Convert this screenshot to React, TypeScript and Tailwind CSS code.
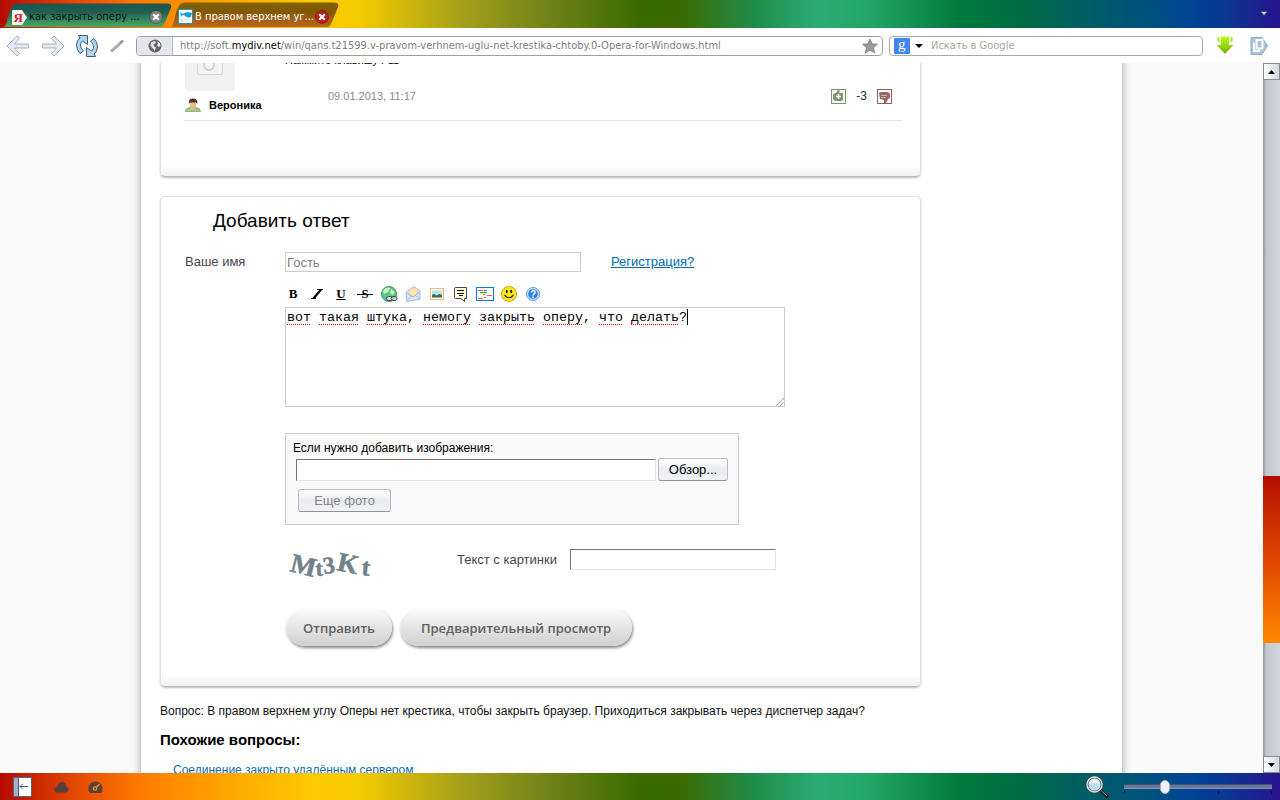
import React, { useState } from "react";
import { clsx } from "clsx";

const rainbow =
  "bg-[linear-gradient(90deg,#b40a00_0%,#e44a00_6%,#ff7b00_11%,#ffa800_18%,#ffc800_24%,#f5cb00_28%,#a5a01a_36%,#6f8218_43%,#3a6b00_50%,#3c6a00_53%,#1f8d4c_59%,#2bad74_64%,#22a566_68%,#007a3c_75%,#006b45_80%,#005f60_84%,#005080_90%,#004494_93%,#0c3590_96%,#28128f_100%)]";

const uiFont = "font-['DejaVu_Sans_Condensed','DejaVu_Sans',sans-serif]";

const softButton =
  "h-[23px] rounded-[3px] border border-[#b9bbc2] border-b-[#8f9198] bg-linear-to-b from-white via-[#ebecf0] to-[#f1f2f5] text-[13px] leading-4";

const sunken =
  "border border-[#e3e3e3] border-l-[#777] border-t-[#777] bg-white px-1 text-[13px] outline-none";

const misspelled = [
  [0, 3],
  [4, 9],
  [10, 15],
  [17, 23],
  [24, 31],
  [32, 37],
  [39, 42],
  [43, 49],
];

function CloseIcon({ color }: { color: string }) {
  return (
    <svg width="14" height="14" viewBox="0 0 14 14">
      <circle cx="7" cy="7" r="6.5" fill={color} stroke="#0004" />
      <path d="M4.2 4.2l5.6 5.6M9.8 4.2L4.2 9.8" stroke="#fff" strokeWidth="2.2" />
    </svg>
  );
}

function Tab({
  title,
  active,
  icon,
}: {
  title: string;
  active?: boolean;
  icon: React.ReactNode;
}) {
  return (
    <div
      className={clsx(
        "relative flex w-[168px] items-center pt-1",
        active ? "-ml-px h-[25px] pl-[7px]" : "h-6 pl-2"
      )}
    >
      <svg
        className="absolute inset-0 size-full"
        viewBox="0 0 168 25"
        preserveAspectRatio="none"
      >
        <defs>
          <linearGradient id={active ? "tabB" : "tabA"} x1="0" x2="0" y1="0" y2="1">
            <stop offset="0" stopColor={active ? "#7d6300" : "#1c5550"} />
            <stop offset="0.4" stopColor={active ? "#835600" : "#225f50"} />
            <stop offset="0.6" stopColor={active ? "#9c5c10" : "#2f7d5c"} />
            <stop offset="1" stopColor={active ? "#bb6620" : "#47a862"} />
          </linearGradient>
        </defs>
        <path
          d="M0 25C4 22 3 12 8 4Q10 0.5 14 0.5H163Q168.500 0.500 167 5L161 20Q159 25 156 25Z"
          fill={active ? "url(#tabB)" : "url(#tabA)"}
        />
      </svg>
      <span className="relative mr-[2px] shrink-0">{icon}</span>
      <a
        href="#tab"
        className={clsx("relative w-[116px] whitespace-nowrap", active ? "text-white" : "text-[#0b1512]")}
      >
        {title}
      </a>
      <button type="button" aria-label="Закрыть вкладку" className="relative ml-1 shrink-0">
        <CloseIcon color={active ? "#c01a1a" : "#808080"} />
      </button>
    </div>
  );
}

function TabBar() {
  return (
    <div className={clsx("flex h-7 shrink-0 items-end justify-between", rainbow)}>
      <div className="flex items-end pb-px pl-1">
        <Tab
          title="как закрыть оперу ..."
          icon={
            <svg width="15" height="15" viewBox="0 0 15 15">
              <path d="M1 0H10L15 7.500L10 15H1Q0 15 0 14V1Q0 0 1 0Z" fill="#f3f3f3" />
              <text x="1.500" y="12" fontSize="13" fontWeight="bold" fill="#e02020" fontFamily="Liberation Serif, serif">
                Я
              </text>
            </svg>
          }
        />
        <Tab
          active
          title="В правом верхнем уг..."
          icon={
            <svg width="15" height="15" viewBox="0 0 15 15">
              <rect x="0.500" y="0.500" width="14" height="14" fill="#fff" stroke="#1c98b8" />
              <path d="M2 3l3 2c2-2 6-2 9-1l-1 4c-3 1-5 0-7-2L3 7z" fill="#1b9fd0" />
              <path d="M3 11h2M7 10l1 1" stroke="#60c0de" />
            </svg>
          }
        />
      </div>
      <button type="button" aria-label="Закрытые вкладки" className="mr-3 mb-3">
        <svg width="8" height="5" viewBox="0 0 8 5">
          <path d="M0.500 0.500H7.500L4 4.500Z" fill="#d0d0ea" stroke="#22205a" strokeWidth="0.500" />
        </svg>
      </button>
    </div>
  );
}

function Arrow({ flip }: { flip?: boolean }) {
  return (
    <svg width="24" height="22" viewBox="0 0 24 22" className={clsx(flip && "-scale-x-100")}>
      <path
        d="M11 1L1 11L11 21L13.500 18.500L8.500 13H22.500V9H8.500L13.500 3.500Z"
        fill="#e3eaf1"
        stroke="#a5b0bd"
        strokeLinejoin="round"
      />
    </svg>
  );
}

function Toolbar() {
  return (
    <div className="flex h-[35px] shrink-0 items-center bg-white pl-[6px] pr-3">
      <button type="button" aria-label="Назад">
        <Arrow />
      </button>
      <button type="button" aria-label="Вперёд" className="ml-[11px]">
        <Arrow flip />
      </button>
      <button type="button" aria-label="Обновить" className="ml-[10px]">
        <svg width="24" height="24" viewBox="0 0 24 24">
          <g fill="#b5d4e8" stroke="#36607f" strokeLinejoin="round">
            <path d="M12.500 1.500H3.500L5 4Q1.500 6.500 1.500 11Q1.500 16 5 19.500L8.500 17Q5.500 14.500 5.500 11Q5.500 8.500 7.500 7L12.500 10.500Z" />
            <path d="M11.500 22.500H20.500L19 20Q22.500 17.500 22.500 13Q22.500 8 19 4.500L15.500 7Q18.500 9.500 18.500 13Q18.500 15.500 16.500 17L11.500 13.500Z" />
          </g>
        </svg>
      </button>
      <button type="button" aria-label="Жезл" className="ml-[10px]">
        <svg width="16" height="16" viewBox="0 0 16 16">
          <path d="M2 13.500L14 2.500" stroke="#999" strokeWidth="3" />
          <path d="M2 12.800L11 4.500" stroke="#d2d2d2" strokeWidth="1" />
        </svg>
      </button>
      <div className="ml-[11px] flex h-5 flex-1 items-center overflow-hidden rounded-[4px] border border-[#9a9fab] bg-white">
        <span className="flex h-full w-9 shrink-0 items-center justify-center border-r border-[#b5b9c3] bg-[#e4e6ec]">
          <svg width="14" height="14" viewBox="0 0 14 14">
            <circle cx="7" cy="7" r="6.500" fill="#666" />
            <path d="M3 3.500L6 2L8 3L6.500 5L5 5.500L6.500 7.500L8 8.500L6.500 12L5 9.500L2.500 7ZM9 2L12 4.500L12.500 7L10.500 8L9 6L10 4.500Z" fill="#e8e8e8" />
          </svg>
        </span>
        <a href="#page" className="ml-[7px] flex-1 truncate text-[#808080]">
          http://soft.<span className="text-black">mydiv.net</span>
          /win/qans.t21599.v-pravom-verhnem-uglu-net-krestika-chtoby.0-Opera-for-Windows.html
        </a>
        <button type="button" aria-label="В закладки" className="mr-1">
          <svg width="16" height="16" viewBox="0 0 16 16">
            <path d="M8 1L10.200 5.800L15.500 6.300L11.500 9.800L12.800 15L8 12.200L3.200 15L4.500 9.800L0.500 6.300L5.800 5.800Z" fill="#999" stroke="#808080" strokeWidth="0.800" />
          </svg>
        </button>
      </div>
      <div className="ml-[6px] flex h-5 w-[314px] items-center rounded-[4px] border border-[#a5a9b5] bg-white pl-1">
        <svg width="16" height="16" viewBox="0 0 16 16" className="shrink-0">
          <rect width="16" height="16" rx="1" fill="#4285f4" />
          <text x="4" y="11" fontSize="15" fill="#fff" fontFamily="Liberation Serif, serif">
            g
          </text>
        </svg>
        <svg width="8" height="4" viewBox="0 0 8 4" className="ml-[5px] shrink-0">
          <path d="M0 0H8L4 4Z" fill="#000" />
        </svg>
        <input
          aria-label="Поиск"
          placeholder="Искать в Google"
          className="ml-2 min-w-0 flex-1 outline-none placeholder:text-[#aaa597]"
        />
      </div>
      <button type="button" aria-label="Загрузки" className="ml-[13px]">
        <svg width="18" height="19" viewBox="0 0 18 19">
          <defs>
            <linearGradient id="dl" x1="0" x2="0" y1="0" y2="1">
              <stop offset="0" stopColor="#bfff10" />
              <stop offset="1" stopColor="#6fae10" />
            </linearGradient>
          </defs>
          <path d="M5 0.500H13V9H17.500L9 18L0.500 9H5Z" fill="url(#dl)" />
          <path d="M2.500 1V6M15.500 1V6" stroke="#a8e82a" strokeWidth="2" />
        </svg>
      </button>
      <button type="button" aria-label="Заметки" className="ml-4">
        <svg width="18" height="18" viewBox="0 0 18 18">
          <path d="M1 0.500H12L17.500 9L12 17.500H1Z" fill="#a9c3da" stroke="#8fabc5" />
          <path d="M6.500 3H12.500V11.500H6.500Z M4 5.500V14H10" fill="none" stroke="#fff" strokeWidth="1.800" />
        </svg>
      </button>
    </div>
  );
}

const cardClass =
  "w-[761px] rounded-[5px] border border-[#e2e2e2] border-b-[#bbb] bg-[linear-gradient(0deg,#f0f0f0_0,#fff_11px)] shadow-[0_1px_2px_#bbb]";

function LastAnswer() {
  return (
    <div className={clsx(cardClass, "h-[154px] rounded-t-none pl-6 pr-[18px]")}>
      <div className="flex h-[97px] border-b border-[#e1e4e6]">
        <div className="w-[100px]">
          <div className="flex h-[67px] w-[50px] justify-center rounded bg-[#f1f1f1] pt-[26px]">
            <svg width="26" height="26" viewBox="0 0 26 26">
              <rect x="0.500" y="4.500" width="25" height="20" rx="2" fill="#f4f4f4" stroke="#d5d5d5" />
              <circle cx="12" cy="15" r="5" fill="none" stroke="#d0d0d0" strokeWidth="2" />
            </svg>
          </div>
          <div className="mt-[7px] flex items-center gap-2 text-[11px] leading-[14px] font-bold text-black">
            <svg width="16" height="14" viewBox="0 0 16 14">
              <path d="M0 13.500Q1 9.500 5 9.500H11Q15 9.500 15.500 13.500Z" fill="#a9c78d" stroke="#6f9058" strokeWidth="0.600" />
              <path d="M5 4H11V7Q11 11 8 11Q5 11 5 7Z" fill="#efbd82" />
              <path d="M3.800 6Q3 0.500 8 0.500T12.200 6L11 4.500H5Z" fill="#49352b" />
            </svg>
            Вероника
          </div>
        </div>
        <div className="flex flex-1 flex-col">
          <p className="mt-[29px] text-[11px] leading-[14px] text-black">Нажмите клавишу F11</p>
          <div className="mt-[21px] flex items-center pl-[43px] pr-[10px]">
            <span className="flex-1 text-[11px] text-[#8a8a8a]">09.01.2013, 11:17</span>
            <button type="button" aria-label="Нравится">
              <svg width="15" height="15" viewBox="0 0 15 15">
                <rect x="0.500" y="0.500" width="14" height="14" fill="#fff" stroke="#749866" />
                <path d="M2 5L5 4L7 1H8.500V4H12V11L10 12H4L2 10Z" fill="#789a6a" />
                <path d="M7.500 5V10M5 7.500H10" stroke="#fff" strokeWidth="1.500" />
              </svg>
            </button>
            <span className="w-[31px] text-center text-[12px] leading-4 text-[#332020]">-3</span>
            <button type="button" aria-label="Не нравится">
              <svg width="15" height="15" viewBox="0 0 15 15">
                <rect x="0.500" y="0.500" width="14" height="14" fill="#fff" stroke="#8c605d" />
                <path d="M2 4L4 3H11L13 5V9L11 10L9 14H7V11L3 10Z" fill="#936865" />
                <path d="M4 6.500H10M4 8.500H9" stroke="#c9aead" />
              </svg>
            </button>
          </div>
        </div>
      </div>
    </div>
  );
}

function Letter({ children, className }: { children: string; className?: string }) {
  return (
    <span className={clsx("font-['Liberation_Serif',serif] text-[13px] leading-4 font-bold text-black", className)}>
      {children}
    </span>
  );
}

const tools = [
  { name: "Жирный", icon: <Letter>B</Letter> },
  {
    name: "Курсив",
    icon: (
      <svg width="14" height="10" viewBox="0 0 14 10">
        <path d="M7 0.500H13M1 9.500H6" stroke="#000" />
        <path d="M11 0.500L3.500 9.500" stroke="#000" strokeWidth="2.200" />
      </svg>
    ),
  },
  { name: "Подчёркнутый", icon: <Letter className="underline">U</Letter> },
  {
    name: "Зачёркнутый",
    icon: (
      <span className="relative flex w-4 justify-center">
        <Letter>S</Letter>
        <span className="absolute inset-x-0 top-2 h-px bg-black" />
      </span>
    ),
  },
  {
    name: "Ссылка",
    icon: (
      <svg width="17" height="17" viewBox="0 0 17 17">
        <circle cx="8" cy="8" r="7.500" fill="#5fc879" stroke="#3a9a56" />
        <path d="M2 5Q5 0 9 2L7 6L3 8ZM10 3L14 6L12 9L9 7Z" fill="#c5f2cd" />
        <path d="M1 10Q3 14 7 15V11Z" fill="#63a8d8" />
        <rect x="5.500" y="10.500" width="6" height="4" rx="2" fill="#ddd" stroke="#444" />
        <rect x="10" y="10.500" width="6" height="4" rx="2" fill="#ddd" fillOpacity="0.600" stroke="#444" />
      </svg>
    ),
  },
  {
    name: "Письмо",
    icon: (
      <svg width="16" height="16" viewBox="0 0 16 16">
        <path d="M1 6L9 0.500L15 5V13L2 15.500Z" fill="#dfeafc" stroke="#9bb6ee" />
        <path d="M4 4L12 2.500L13 8L8 11L4 9Z" fill="#fde9a8" stroke="#efc980" strokeWidth="0.600" />
        <path d="M1 6.500L8 11L15 5.500M2 15L6 10M15 13L10 9.500" fill="none" stroke="#9bb6ee" />
      </svg>
    ),
  },
  {
    name: "Картинка",
    icon: (
      <svg width="14" height="12" viewBox="0 0 14 12">
        <rect x="0.500" y="0.500" width="13" height="11" fill="#fff" stroke="#f0b77a" />
        <rect x="2" y="2.500" width="10" height="7" fill="#b8e0f0" />
        <path d="M2 9.500V7L4 6L7 7.500L9 6L12 7V9.500Z" fill="#3c6a42" />
        <circle cx="9.500" cy="4" r="1" fill="#f6d860" />
      </svg>
    ),
  },
  {
    name: "Цитата",
    icon: (
      <svg width="14" height="15" viewBox="0 0 14 15">
        <path d="M1.500 0.500H12.500V11.500H10.500V14.500L7 11.500H1.500Q0.500 11.500 0.500 10.500V1.500Q0.500 0.500 1.500 0.500Z" fill="#fffdd8" stroke="#444" />
        <path d="M3 3.500H10M3 6.500H10M5 8.500H9" stroke="#000" />
      </svg>
    ),
  },
  {
    name: "Код",
    icon: (
      <svg width="18" height="14" viewBox="0 0 18 14">
        <rect x="0.500" y="0.500" width="17" height="13" fill="#fff" stroke="#0d75e0" />
        <path d="M2 3.500H7M11 8.500H16" stroke="#e0682c" />
        <path d="M4 5.500H11" stroke="#3fa83f" />
        <path d="M7 7.500H9M2 11.500H7M8 10.500H10" stroke="#e0682c" />
        <path d="M8 3.500H11" stroke="#2d8de8" />
      </svg>
    ),
  },
  {
    name: "Смайлы",
    icon: (
      <svg width="16" height="16" viewBox="0 0 16 16">
        <circle cx="8" cy="8" r="7.500" fill="#ffe817" stroke="#c8a400" />
        <ellipse cx="5.800" cy="5.500" rx="1" ry="1.700" fill="#222" />
        <ellipse cx="10.200" cy="5.500" rx="1" ry="1.700" fill="#222" />
        <path d="M3.500 9Q8 14.500 12.500 9" fill="none" stroke="#222" strokeWidth="1.200" />
      </svg>
    ),
  },
  {
    name: "Помощь",
    icon: (
      <svg width="14" height="14" viewBox="0 0 14 14">
        <circle cx="7" cy="7" r="6.500" fill="#cfe5fb" stroke="#4f9de8" />
        <circle cx="7" cy="7" r="4.800" fill="#2280df" />
        <text x="7" y="10.500" fontSize="10" fontWeight="bold" textAnchor="middle" fill="#fff" fontFamily="Liberation Sans, sans-serif">
          ?
        </text>
      </svg>
    ),
  },
];

function AnswerForm() {
  const [answer, setAnswer] = useState("вот такая штука, немогу закрыть оперу, что делать?");

  return (
    <form
      className={clsx(cardClass, "mt-[19px] flex flex-col pb-10 pl-6 text-[13px] leading-4 text-[#4a4350]")}
      onSubmit={(e) => e.preventDefault()}
    >
      <h2 className="mt-3 pl-7 text-[19px] leading-6 text-black">Добавить ответ</h2>
      <div className="mt-[19px] flex items-center">
        <label htmlFor="name" className="w-[100px]">
          Ваше имя
        </label>
        <input
          id="name"
          defaultValue="Гость"
          className="h-5 w-[296px] border border-[#ccc] bg-white px-px text-[13px] text-[#808080] outline-none"
        />
        <a href="#register" className="ml-[30px] text-[#006ab0] underline">
          Регистрация?
        </a>
      </div>
      <div className="ml-24 mt-3 flex h-5">
        {tools.map((tool) => (
          <button
            key={tool.name}
            type="button"
            aria-label={tool.name}
            className="flex w-6 items-center justify-center"
          >
            {tool.icon}
          </button>
        ))}
      </div>
      <div className="relative ml-[100px] mt-[3px] h-[100px] w-[500px]">
        <textarea
          aria-label="Ответ"
          value={answer}
          spellCheck={false}
          onChange={(e) => setAnswer(e.target.value)}
          className="block size-full resize-none border border-[#ccc] bg-white px-px py-[2px] font-['Liberation_Mono',monospace] text-[10pt] leading-4 text-black outline-none"
        />
        <svg className="pointer-events-none absolute left-[2px] top-0" width="404" height="20">
          {misspelled.map(([from, to]) => (
            <line key={from} x1={from * 8} x2={to * 8} y1="17.500" y2="17.500" stroke="#e00000" strokeDasharray="1 1" />
          ))}
          <line x1="400.500" x2="400.500" y1="2" y2="18" stroke="#000" />
        </svg>
        <svg className="pointer-events-none absolute bottom-px right-px" width="8" height="8" viewBox="0 0 8 8">
          <path d="M0 8L8 0M4 8L8 4" stroke="#999" />
        </svg>
      </div>
      <div className="ml-[100px] mt-[26px] h-[92px] w-[454px] border border-[#ccc] bg-[#fafafa] pl-[7px] pt-[6px]">
        <label htmlFor="file" className="block text-[12px] leading-4 text-black">
          Если нужно добавить изображения:
        </label>
        <div className="mt-[2px] flex items-center gap-[2px] pl-[3px]">
          <input id="file" className={clsx(sunken, "h-[22px] w-[360px]")} />
          <button type="button" className={clsx(softButton, "w-[70px] text-black")}>
            Обзор...
          </button>
        </div>
        <button type="button" disabled className={clsx(softButton, "ml-[5px] mt-2 w-[93px] text-[#858585]")}>
          Еще фото
        </button>
      </div>
      <div className="ml-[100px] mt-6 flex h-[34px] items-start">
        <svg width="90" height="34" viewBox="0 0 90 34" className="mr-[82px]" role="img">
          <g fontFamily="Liberation Serif, serif" fontWeight="bold" fill="#72828b" stroke="#72828b" strokeWidth="0.500">
            <text x="4" y="22" fontSize="27" transform="rotate(14 4 22)">M</text>
            <text x="31" y="27" fontSize="22" transform="rotate(-4 31 27)">t</text>
            <text x="39" y="25" fontSize="24" transform="rotate(-8 39 25)">3</text>
            <text x="51" y="21" fontSize="27" transform="rotate(12 51 21)">K</text>
            <text x="76" y="26" fontSize="25" transform="rotate(6 76 26)">t</text>
          </g>
        </svg>
        <label htmlFor="captcha" className="mt-[3px] w-[113px]">
          Текст с картинки
        </label>
        <input id="captcha" className={clsx(sunken, "h-[21px] w-[206px]")} />
      </div>
      <div className="ml-[101px] mt-[26px] flex gap-2 font-['Open_Sans',sans-serif] text-[13px] font-semibold text-[#606060]">
        <button
          type="submit"
          className="h-[37px] rounded-full bg-linear-to-b from-[#fcfcfc] to-[#cfcfcf] px-[17px] shadow-[1px_2px_3px_#888]"
        >
          Отправить
        </button>
        <button
          type="button"
          className="h-[37px] rounded-full bg-linear-to-b from-[#fcfcfc] to-[#cfcfcf] px-[21px] shadow-[1px_2px_3px_#888]"
        >
          Предварительный просмотр
        </button>
      </div>
    </form>
  );
}

function ScrollBar() {
  const arrow =
    "flex h-[17px] w-full shrink-0 items-center justify-center border border-[#8a8c92] bg-linear-to-r from-white to-[#d5d8e0]";
  return (
    <div className="flex w-[17px] shrink-0 flex-col bg-linear-to-r from-[#9a9da3] from-5% via-[#c3c7ce] via-20% to-[#d0d4dc]">
      <button type="button" aria-label="Вверх" className={arrow}>
        <svg width="7" height="4" viewBox="0 0 7 4">
          <path d="M0 4H7L3.500 0Z" />
        </svg>
      </button>
      <div className="grow-[396]" />
      <div className="grow-[167] bg-linear-to-b from-[#b40a00] via-[#e04400] to-[#ff8800]" />
      <div className="grow-[113]" />
      <button type="button" aria-label="Вниз" className={arrow}>
        <svg width="7" height="4" viewBox="0 0 7 4">
          <path d="M0 0H7L3.500 4Z" />
        </svg>
      </button>
    </div>
  );
}

function StatusBar() {
  return (
    <div className={clsx("flex h-[27px] shrink-0 items-center pl-[13px] pr-2", rainbow)}>
      <button type="button" aria-label="Панели">
        <svg width="19" height="20" viewBox="0 0 19 20">
          <rect x="0.500" y="0.500" width="18" height="19" fill="#fff" stroke="#54657c" />
          <rect x="1" y="1" width="4" height="18" fill="#9eb2c8" />
          <path d="M5.500 1V19M7 9.500H15M9.500 7L7 9.500L9.500 12" fill="none" stroke="#435878" />
        </svg>
      </button>
      <button type="button" aria-label="Opera Link" className="ml-[22px]">
        <svg width="15" height="12" viewBox="0 0 15 12">
          <path d="M3.500 11.500Q0.500 11 0.500 8.500T3.500 5.500Q4 1 8 1T12 5.500Q14.500 6 14.500 8.500T11.500 11.500Z" fill="#553e3c" />
        </svg>
      </button>
      <button type="button" aria-label="Opera Turbo" className="ml-[19px]">
        <svg width="15" height="12" viewBox="0 0 15 12">
          <path d="M1.500 12Q0 9 0.500 6.500Q2 0.500 7.500 0.500T14.500 6.500Q15 9 13.500 12Z" fill="#5c4236" />
          <circle cx="7" cy="7.500" r="1.700" fill="none" stroke="#f28c3c" strokeWidth="1.300" />
          <path d="M8.200 6.500L11.500 3" stroke="#f28c3c" strokeWidth="1.300" />
        </svg>
      </button>
      <svg width="25" height="24" viewBox="0 0 25 24" className="ml-auto">
        <path d="M15 15L23 22.500" stroke="#222" strokeWidth="3.500" />
        <path d="M16 15.500L22 21" stroke="#999" strokeWidth="1" />
        <circle cx="9.500" cy="9.500" r="7.500" fill="#bcdcf2" stroke="#4d4d4d" strokeWidth="2.600" />
        <circle cx="9.500" cy="9.500" r="7.500" fill="none" stroke="#ddd" strokeWidth="1.400" />
        <path d="M4.500 9Q5 4.500 9.500 4.500T14.500 9Q9.500 7 4.500 9Z" fill="#eef8ff" />
      </svg>
      <div className="relative ml-[14px] w-[148px]">
        <svg className="absolute left-0 top-4" width="148" height="3">
          <path d="M0.500 0V3M41.500 0V3M94.500 0V3M147.500 0V3" stroke="#0c1638" />
        </svg>
        <input
          type="range"
          aria-label="Масштаб"
          defaultValue={26}
          className="relative block h-6 w-full appearance-none bg-transparent [&::-webkit-slider-runnable-track]:h-[5px] [&::-webkit-slider-runnable-track]:border-y [&::-webkit-slider-runnable-track]:border-t-[#3d4f7a] [&::-webkit-slider-runnable-track]:border-b-[#7898c8] [&::-webkit-slider-runnable-track]:bg-[#6b7692] [&::-webkit-slider-thumb]:-mt-[5px] [&::-webkit-slider-thumb]:h-[14px] [&::-webkit-slider-thumb]:w-[10px] [&::-webkit-slider-thumb]:appearance-none [&::-webkit-slider-thumb]:rounded-[5px] [&::-webkit-slider-thumb]:border [&::-webkit-slider-thumb]:border-[#aab] [&::-webkit-slider-thumb]:bg-[#eef3f6]"
        />
      </div>
    </div>
  );
}

export default function App() {
  return (
    <div className={clsx("flex h-screen flex-col overflow-hidden text-[11px] leading-[14px]", uiFont)}>
      <TabBar />
      <Toolbar />
      <div className="flex min-h-0 flex-1">
        <main className="min-w-0 flex-1 overflow-hidden bg-[#fafafa] font-['Liberation_Sans',sans-serif]">
          {/* page is scrolled down, so its top is out of view */}
          <div className="-mt-10 mx-auto w-[981px] bg-white pl-[19px] shadow-[0_0_8px_#999]">
            <LastAnswer />
            <AnswerForm />
            <p className="mt-4 text-[12px] leading-4 text-[#111]">
              Вопрос: В правом верхнем углу Оперы нет крестика, чтобы закрыть браузер. Приходиться закрывать
              через диспетчер задач?
            </p>
            <h3 className="mt-[11px] text-[15px] leading-5 font-bold text-black">Похожие вопросы:</h3>
            <ul className="mt-3 pb-8 pl-[13px] text-[12px] leading-4">
              <li>
                <a href="#similar" className="text-[#0a6db5]">
                  Соединение закрыто удалённым сервером
                </a>
              </li>
            </ul>
          </div>
        </main>
        <ScrollBar />
      </div>
      <StatusBar />
    </div>
  );
}
